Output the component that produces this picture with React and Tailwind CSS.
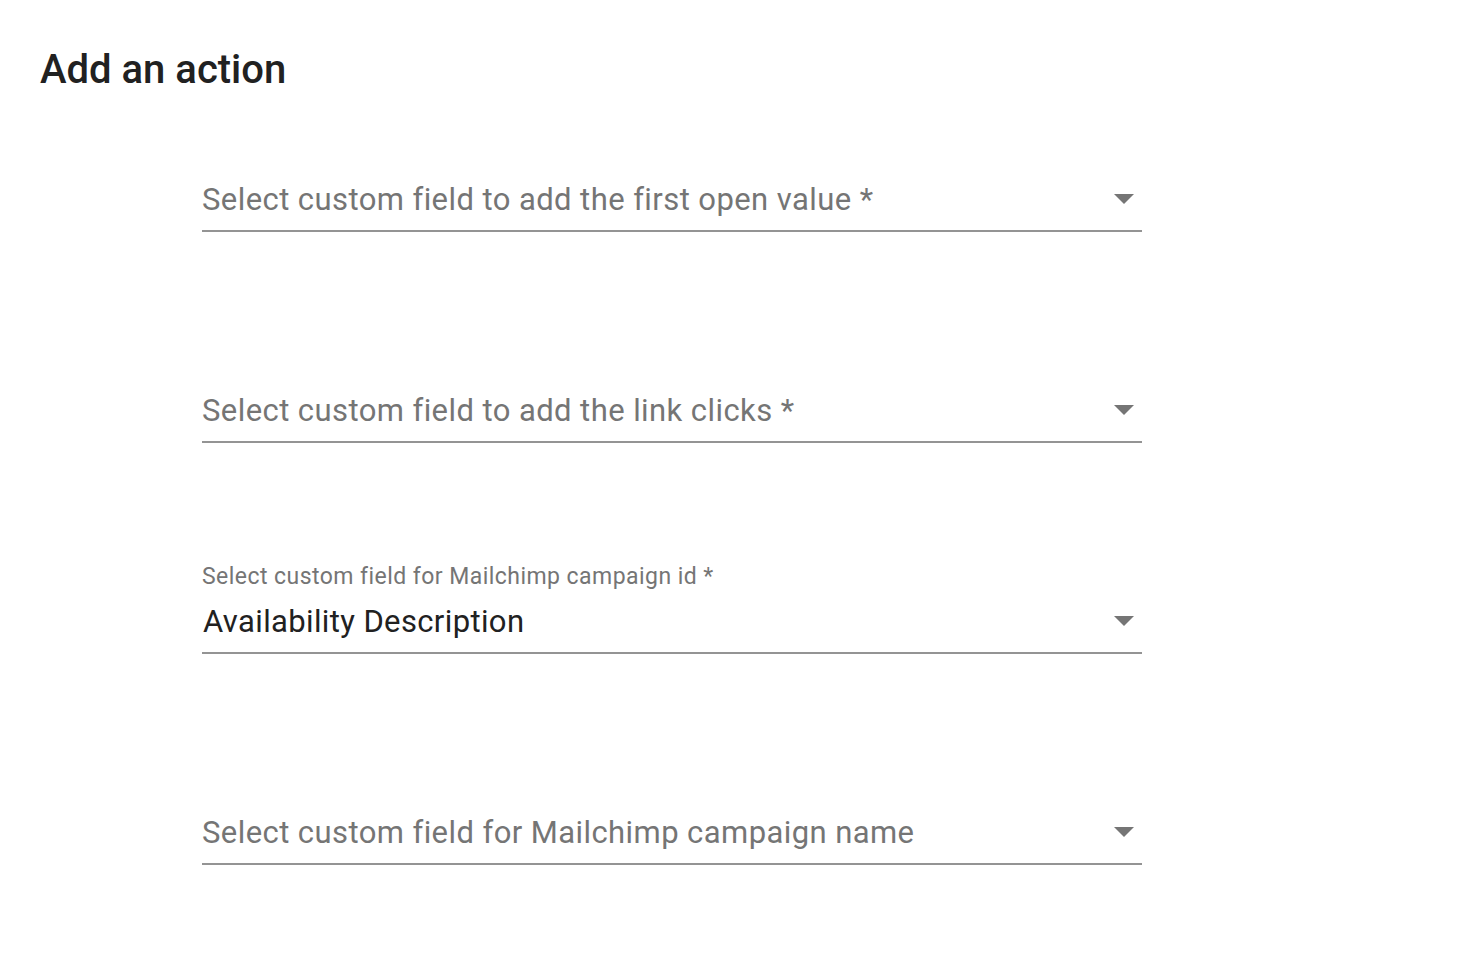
import React from "react";

function Arrow() {
  return (
    <svg width="20" height="10" viewBox="0 0 20 10" className="shrink-0">
      <path d="M0 0 L20 0 L10 10 Z" fill="#757575" />
    </svg>
  );
}

function Field({ label, placeholder, value }) {
  return (
    <div className="flex flex-col">
      <div className="h-[30px] pt-[4px] flex items-center text-[23px] leading-none tracking-[0.45px] text-[#757575]">
        {label}
      </div>
      <div className="h-[65px] flex items-center justify-between border-b-2 border-[#949494] pr-[8px]">
        {value ? (
          <span className="text-[31px] leading-none tracking-[0.37px] text-[#212121] pl-[1px] pt-[1px]">{value}</span>
        ) : (
          <span className="text-[31px] leading-none tracking-[0.42px] text-[#757575] pt-[1px]">{placeholder}</span>
        )}
        <Arrow />
      </div>
    </div>
  );
}

export default function App() {
  return (
    <div
      className="min-h-screen bg-white pl-[40px] pt-[48px]"
      style={{ fontFamily: "Roboto, 'Liberation Sans', sans-serif" }}
    >
      <h1 className="text-[40px] leading-[44px] font-medium text-[#212121] m-0">Add an action</h1>
      <div className="ml-[162px] w-[940px] mt-[45px] flex flex-col gap-[116px]">
        <Field placeholder="Select custom field to add the first open value *" />
        <Field placeholder="Select custom field to add the link clicks *" />
        <Field label="Select custom field for Mailchimp campaign id *" value="Availability Description" />
        <Field placeholder="Select custom field for Mailchimp campaign name" />
      </div>
    </div>
  );
}
